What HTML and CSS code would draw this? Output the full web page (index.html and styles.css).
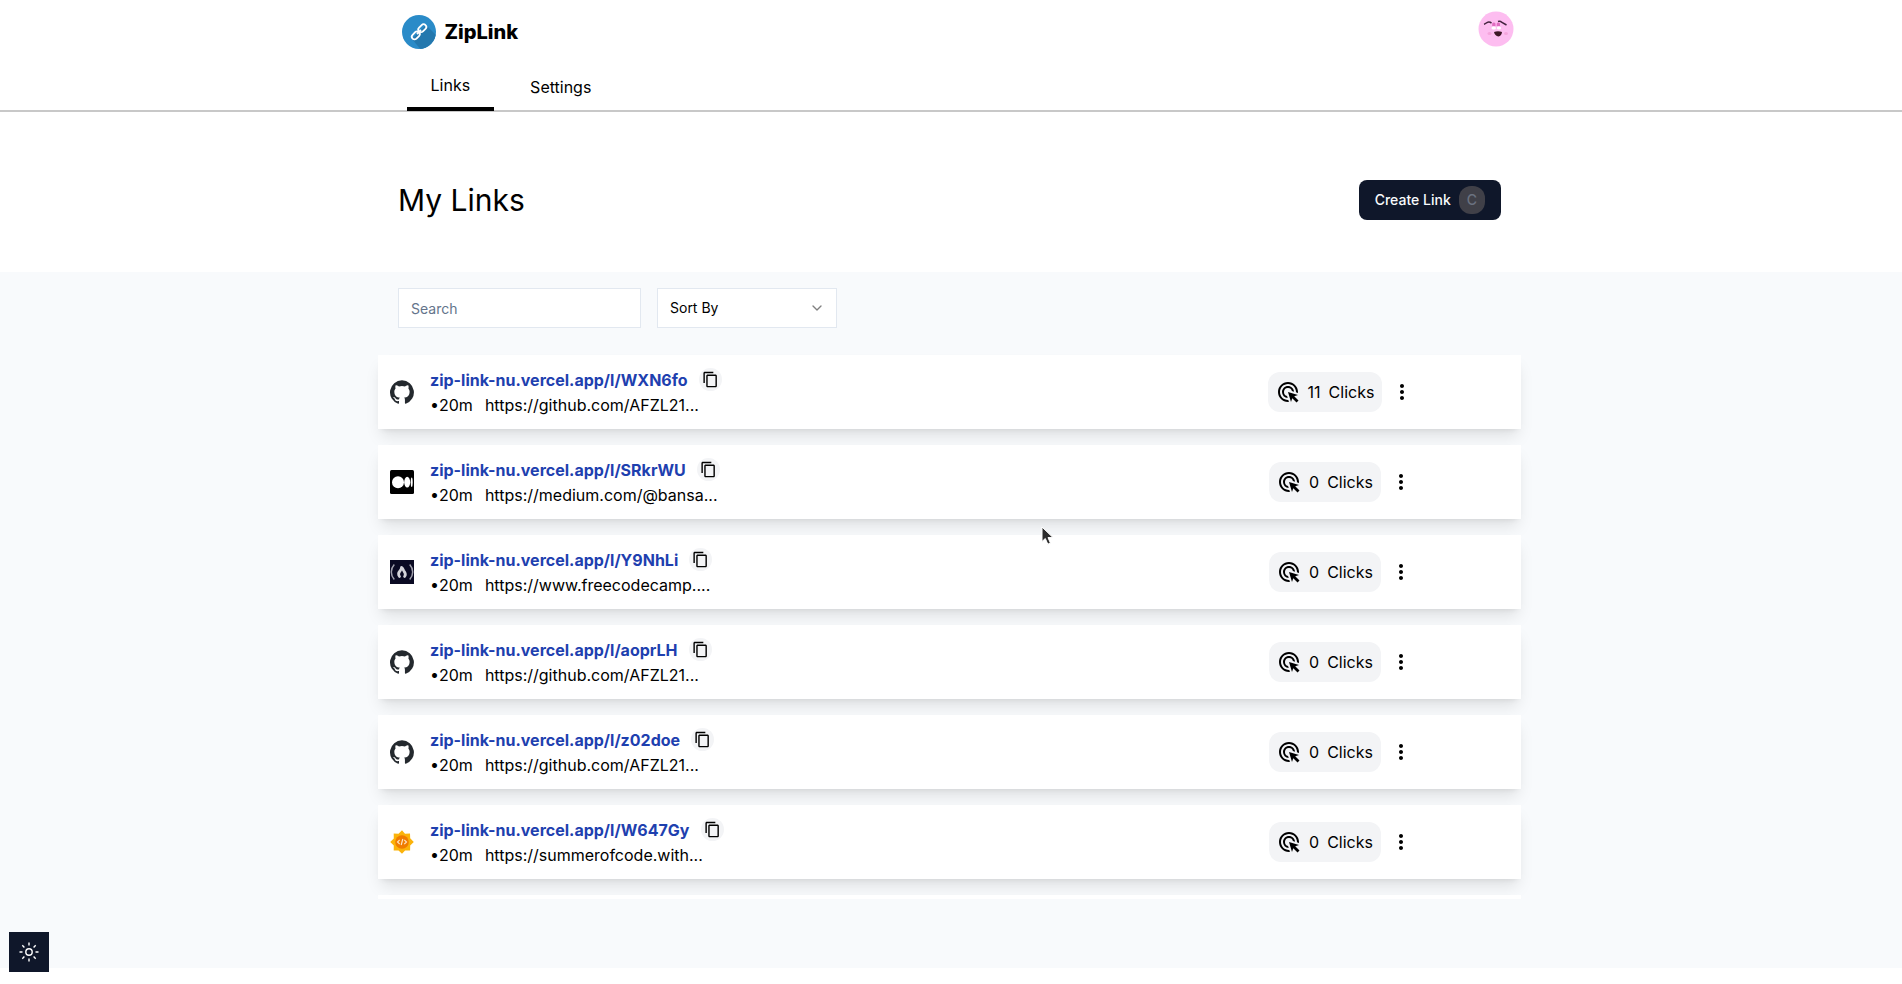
FILE: index.html
```
<!DOCTYPE html>
<html lang="en">
<head>
<meta charset="utf-8">
<title>ZipLink</title>
<link rel="stylesheet" href="styles.css">
</head>
<body>
<svg class="defs" aria-hidden="true">
  <symbol id="copy" viewBox="0 0 24 24"><path d="M16 1H4c-1.1 0-2 .9-2 2v14h2V3h12V1zm3 4H8c-1.1 0-2 .9-2 2v14c0 1.1.9 2 2 2h11c1.1 0 2-.9 2-2V7c0-1.1-.9-2-2-2zm0 16H8V7h11v14z"/></symbol>
  <symbol id="click" viewBox="0 0 24 24"><path d="M11.71 17.99A5.993 5.993 0 0 1 6 12c0-3.31 2.69-6 6-6 3.22 0 5.84 2.53 5.99 5.71l-2.1-.63a3.999 3.999 0 1 0-4.81 4.81l.63 2.1zM22 12c0 .3-.01.6-.04.9l-1.97-.59c.01-.1.01-.21.01-.31 0-4.42-3.58-8-8-8s-8 3.58-8 8 3.58 8 8 8c.1 0 .21 0 .31-.01l.59 1.97c-.3.03-.6.04-.9.04-5.52 0-10-4.48-10-10S6.48 2 12 2s10 4.480 10 10zm-3.770 4.260L22 15l-10-3 3 10 1.260-3.770 4.270 4.270 1.980-1.980-4.280-4.260z"/></symbol>
  <symbol id="more" viewBox="0 0 24 24"><path d="M12 8c1.1 0 2-.9 2-2s-.9-2-2-2-2 .9-2 2 .9 2 2 2zm0 2c-1.1 0-2 .9-2 2s.9 2 2 2 2-.9 2-2-.9-2-2-2zm0 6c-1.1 0-2 .9-2 2s.9 2 2 2 2-.9 2-2-.9-2-2-2z"/></symbol>
  <symbol id="github" viewBox="0 0 24 24"><path fill="#24292e" d="M12 .3a12 12 0 0 0-3.8 23.38c.6.12.83-.26.83-.57L9 21.07c-3.34.72-4.04-1.61-4.04-1.61-.55-1.39-1.34-1.76-1.34-1.76-1.08-.74.09-.73.09-.73 1.2.09 1.83 1.24 1.83 1.24 1.08 1.83 2.81 1.3 3.5 1 .1-.78.42-1.31.76-1.61-2.67-.3-5.47-1.33-5.47-5.93 0-1.31.47-2.38 1.24-3.22-.14-.3-.54-1.52.1-3.18 0 0 1-.32 3.3 1.23a11.5 11.5 0 0 1 6 0c2.28-1.55 3.29-1.23 3.29-1.23.64 1.66.24 2.88.12 3.18a4.65 4.65 0 0 1 1.23 3.22c0 4.61-2.8 5.63-5.48 5.92.42.36.81 1.1.81 2.22l-.01 3.29c0 .31.2.69.82.57A12 12 0 0 0 12 .3"/></symbol>
  <symbol id="medium" viewBox="0 0 24 24"><rect width="24" height="24" rx="1.5"/><g fill="#fff"><circle cx="8" cy="12.2" r="6"/><ellipse cx="17.2" cy="12.2" rx="3" ry="5.4"/><ellipse cx="21.7" cy="12.2" rx="1" ry="4.8"/></g></symbol>
  <symbol id="fcc" viewBox="0 0 24 24"><rect width="24" height="24" fill="#0a0a23"/><g fill="none" stroke="#a0a0ac" stroke-width="1.5"><path d="M4.3 4.5C.3 9 .3 15 4.3 19.5M19.7 4.5c4 4.5 4 10.5 0 15"/></g><path fill="none" stroke="#d4d4da" stroke-width="2.8" stroke-linecap="round" stroke-linejoin="round" d="M9.500 16.500c-2-2.500-.5-4.500.8-6 .9-1.100 1.300-2 1.200-3.200 1.800 1.200 1.500 2.400 2.300 3.500 1.500 1.900 2.400 3.700.8 5.700"/></symbol>
  <symbol id="gsoc" viewBox="0 0 24 24"><path fill="#fbb30b" d="M12 .3l3 3.5 5-.2.2 4.6 3.6 3.8-3.6 3.6-.1 4.9-5-.1-3.1 3.4-3.5-3.4-4.8.1.1-4.9L.2 12l3.6-3.6-.1-4.8 4.8.2z"/><circle cx="12" cy="12" r="6.8" fill="#f07c00"/><g fill="none" stroke="#fde3c2" stroke-width="1.2"><path d="M9.700 9.800L7.500 12l2.200 2.200M14.300 9.800l2.200 2.200-2.200 2.200M12.800 9l-1.600 6"/></g></symbol>
</svg>

<header class="topbar">
  <div class="topbar-inner">
    <a class="brand" href="#">
      <svg class="logo" viewBox="0 0 34 34" aria-hidden="true">
        <defs><clipPath id="disc"><circle cx="17" cy="17" r="17"/></clipPath></defs>
        <circle cx="17" cy="17" r="17" fill="#2a8bc8"/>
        <path clip-path="url(#disc)" fill="#2478ae" d="M24 10l12 12v14H20L10 24z"/>
        <g fill="none" stroke="#fff" stroke-width="1.8"><rect x="-4.5" y="-2.700" width="9" height="5.400" rx="2.700" transform="translate(20.300 13.200) rotate(-45)"/><rect x="-4.500" y="-2.700" width="9" height="5.400" rx="2.700" transform="translate(13.800 20.400) rotate(-45)"/><path d="M15 19l4-4"/></g>
      </svg>
      <span>ZipLink</span>
    </a>
    <button class="avatar" aria-label="Account">
      <svg viewBox="0 0 36 36" aria-hidden="true">
        <circle cx="18" cy="18" r="17.500" fill="#fdbdf0"/>
        <path d="M6 13.300c1.500-.3 2.300-1.800 3.800-2.100 1.700-.3 2.700 0 3.700.9M20 10.500c2-.6 3 0 4 1l4.500 2.500" fill="none" stroke="#43243f" stroke-width="1.500"/>
        <path d="M14.200 15v-2.500c1-1.500 2.300-1.500 3.300 0V15zM18.700 15v-2.500c1-1.500 2.300-1.500 3.300 0V15z" fill="#e06cc0"/>
        <ellipse cx="15.700" cy="17" rx="2.300" ry="1.500" fill="#fff"/><ellipse cx="20.900" cy="17" rx="2.200" ry="1.500" fill="#fff"/>
        <ellipse cx="11.500" cy="22.500" rx="2" ry="1.500" fill="#f5a5dc"/><ellipse cx="28" cy="22.500" rx="2" ry="1.500" fill="#f5a5dc"/>
        <path d="M16 21c2.500-1 5.500-1 8 0-.2 2.300-1.500 4.200-3.500 4.500-2.500-.5-4-2-4.500-4.500z" fill="#3d1625"/>
      </svg>
    </button>
  </div>
  <nav class="tabs">
    <a class="tab active" href="#">Links</a>
    <a class="tab" href="#">Settings</a>
  </nav>
</header>

<section class="heading">
  <div class="heading-inner">
    <h1>My Links</h1>
    <button class="create">Create Link <kbd>C</kbd></button>
  </div>
</section>

<main class="content">
  <div class="filters">
    <input class="search" type="text" placeholder="Search" aria-label="Search">
    <div class="sort">
      <select aria-label="Sort By"><option>Sort By</option></select>
      <svg viewBox="0 0 24 24" aria-hidden="true"><path d="m6 9 6 6 6-6"/></svg>
    </div>
  </div>
  <div class="scroller">
    <ul class="cards">
      <li class="card">
        <svg class="favicon"><use href="#github"/></svg>
        <div class="info">
          <div class="line"><a href="#">zip-link-nu.vercel.app/l/WXN6fo</a><button class="copy" aria-label="Copy"><svg><use href="#copy"/></svg></button></div>
          <div class="meta"><span>•20m</span><span>https://github.com/AFZL21...</span></div>
        </div>
        <div class="actions"><div class="clicks"><svg><use href="#click"/></svg><span>11</span><span>Clicks</span></div><button class="more" aria-label="More"><svg><use href="#more"/></svg></button></div>
      </li>
      <li class="card">
        <svg class="favicon"><use href="#medium"/></svg>
        <div class="info">
          <div class="line"><a href="#">zip-link-nu.vercel.app/l/SRkrWU</a><button class="copy" aria-label="Copy"><svg><use href="#copy"/></svg></button></div>
          <div class="meta"><span>•20m</span><span>https://medium.com/@bansa...</span></div>
        </div>
        <div class="actions"><div class="clicks"><svg><use href="#click"/></svg><span>0</span><span>Clicks</span></div><button class="more" aria-label="More"><svg><use href="#more"/></svg></button></div>
      </li>
      <li class="card">
        <svg class="favicon"><use href="#fcc"/></svg>
        <div class="info">
          <div class="line"><a href="#">zip-link-nu.vercel.app/l/Y9NhLi</a><button class="copy" aria-label="Copy"><svg><use href="#copy"/></svg></button></div>
          <div class="meta"><span>•20m</span><span>https://www.freecodecamp....</span></div>
        </div>
        <div class="actions"><div class="clicks"><svg><use href="#click"/></svg><span>0</span><span>Clicks</span></div><button class="more" aria-label="More"><svg><use href="#more"/></svg></button></div>
      </li>
      <li class="card">
        <svg class="favicon"><use href="#github"/></svg>
        <div class="info">
          <div class="line"><a href="#">zip-link-nu.vercel.app/l/aoprLH</a><button class="copy" aria-label="Copy"><svg><use href="#copy"/></svg></button></div>
          <div class="meta"><span>•20m</span><span>https://github.com/AFZL21...</span></div>
        </div>
        <div class="actions"><div class="clicks"><svg><use href="#click"/></svg><span>0</span><span>Clicks</span></div><button class="more" aria-label="More"><svg><use href="#more"/></svg></button></div>
      </li>
      <li class="card">
        <svg class="favicon"><use href="#github"/></svg>
        <div class="info">
          <div class="line"><a href="#">zip-link-nu.vercel.app/l/z02doe</a><button class="copy" aria-label="Copy"><svg><use href="#copy"/></svg></button></div>
          <div class="meta"><span>•20m</span><span>https://github.com/AFZL21...</span></div>
        </div>
        <div class="actions"><div class="clicks"><svg><use href="#click"/></svg><span>0</span><span>Clicks</span></div><button class="more" aria-label="More"><svg><use href="#more"/></svg></button></div>
      </li>
      <li class="card">
        <svg class="favicon"><use href="#gsoc"/></svg>
        <div class="info">
          <div class="line"><a href="#">zip-link-nu.vercel.app/l/W647Gy</a><button class="copy" aria-label="Copy"><svg><use href="#copy"/></svg></button></div>
          <div class="meta"><span>•20m</span><span>https://summerofcode.with...</span></div>
        </div>
        <div class="actions"><div class="clicks"><svg><use href="#click"/></svg><span>0</span><span>Clicks</span></div><button class="more" aria-label="More"><svg><use href="#more"/></svg></button></div>
      </li>
      <li class="card"></li>
    </ul>
  </div>
</main>

<button class="theme" aria-label="Toggle theme">
  <svg viewBox="0 0 20 20" aria-hidden="true"><circle cx="10" cy="10" r="3.200"/><path d="M10 .5v3M10 16.500v3M.5 10h3M16.500 10h3M3.300 3.300l2.100 2.100M14.600 14.600l2.100 2.100M3.300 16.700l2.100-2.100M14.600 5.400l2.100-2.100"/></svg>
</button>
<svg class="pointer" viewBox="0 0 14 20" aria-hidden="true"><path d="M1 1v14.500l3.300-3 2.500 5.700 2.600-1.200-2.400-5.400h5z" fill="#2c2c2c" stroke="#fff" stroke-width="1"/></svg>
</body>
</html>
```
FILE: styles.css
```
* { box-sizing: border-box; }
body {
  margin: 0;
  height: 100vh;
  padding-bottom: 16px;
  display: flex;
  flex-direction: column;
  overflow: hidden;
  background: #fff;
  color: #000;
  font: 16px/24px Inter, sans-serif;
}
button, input, select { font: inherit; color: inherit; }
button { border: 0; padding: 0; background: none; cursor: pointer; }
a { color: inherit; text-decoration: none; }
svg { display: block; }
.defs { position: absolute; width: 0; height: 0; }

.topbar { flex: none; border-bottom: 2px solid #c8c8c8; }
.topbar-inner, .tabs, .heading-inner, .filters, .cards {
  width: 100%;
  max-width: 1143px;
  margin: 0 auto;
}
.topbar-inner {
  display: flex;
  justify-content: space-between;
  align-items: center;
  height: 64px;
  padding: 0 9px 0 22px;
}
.brand { display: flex; align-items: center; gap: 9px; font-size: 20px; font-weight: 800; }
.logo { width: 34px; height: 34px; }
.avatar { align-self: flex-start; margin-top: 11px; }
.avatar svg { width: 36px; height: 36px; }
.tabs { display: flex; gap: 12px; height: 46px; padding: 0 27px; }
.tab { height: 47px; padding: 11px 24px; }
.active { padding-top: 9px; border-bottom: 4px solid #000; }

.heading { flex: none; padding: 64px 3px 48px 0; }
.heading-inner { display: flex; justify-content: space-between; align-items: center; padding: 0 20px; height: 48px; }
h1 { margin: 0; font-size: 30px; line-height: 36px; font-weight: 400; }
.create {
  display: flex;
  align-items: center;
  gap: 8px;
  height: 40px;
  padding: 0 16px;
  border-radius: 8px;
  background: #0f172a;
  color: #f8fafc;
  font-size: 14px;
  font-weight: 500;
}
kbd { padding: 2px 8px; border-radius: 12px; background: #404048; color: #6b7280; font: inherit; }

.content { flex: 1; min-height: 0; display: flex; flex-direction: column; padding: 16px 3px 69px 0; background: #f8fafc; }
.filters { display: flex; flex: none; gap: 16px; padding: 0 20px; font-size: 14px; }
.search { width: 243px; height: 40px; padding: 0 12px; border: 1px solid #e2e8f0; background: #fff; }
.search::placeholder { color: #64748b; opacity: 1; }
.sort { display: grid; width: 180px; height: 40px; align-items: center; }
.sort > * { grid-area: 1 / 1; }
.sort select { appearance: none; width: 100%; height: 40px; padding: 0 12px; border: 1px solid #e2e8f0; border-radius: 0; background: #fff; }
.sort svg { justify-self: end; margin-right: 12px; width: 16px; height: 16px; fill: none; stroke: #808080; stroke-width: 2; stroke-linecap: round; stroke-linejoin: round; pointer-events: none; }

.scroller { flex: 1; min-height: 0; overflow: hidden; padding-top: 27px; }
.cards { display: flex; flex-direction: column; gap: 16px; padding: 0; list-style: none; }
.card {
  display: flex;
  align-items: center;
  gap: 16px;
  min-height: 74px;
  padding: 0 0 0 12px;
  background: #fff;
  box-shadow: 0 10px 15px -3px rgba(0, 0, 0, .1), 0 4px 6px -4px rgba(0, 0, 0, .1);
}
.favicon { flex: none; width: 24px; height: 24px; }
.info { flex: 1; }
.line { display: flex; align-items: center; gap: 11px; color: #1e40af; font-weight: 700; }
.copy { padding: 3px; border-radius: 12px; background: #f3f4f6; color: #000; }
.copy svg { width: 17px; height: 17px; }
.meta { display: flex; gap: 12px; margin-top: 1px; }
.actions { display: flex; justify-content: center; align-items: center; gap: 8px; width: 360px; }
.clicks { display: flex; align-items: center; gap: 8px; height: 40px; padding: 0 8px; border-radius: 12px; background: #f3f4f6; }
.clicks svg, .more svg { width: 24px; height: 24px; }

.theme { position: fixed; left: 9px; bottom: 12px; display: grid; place-items: center; width: 40px; height: 40px; background: #0f172a; }
.theme svg { width: 20px; height: 20px; fill: none; stroke: #fff; stroke-width: 1.4; }
.pointer { position: absolute; left: 1041px; top: 526px; width: 14px; height: 20px; }
```
